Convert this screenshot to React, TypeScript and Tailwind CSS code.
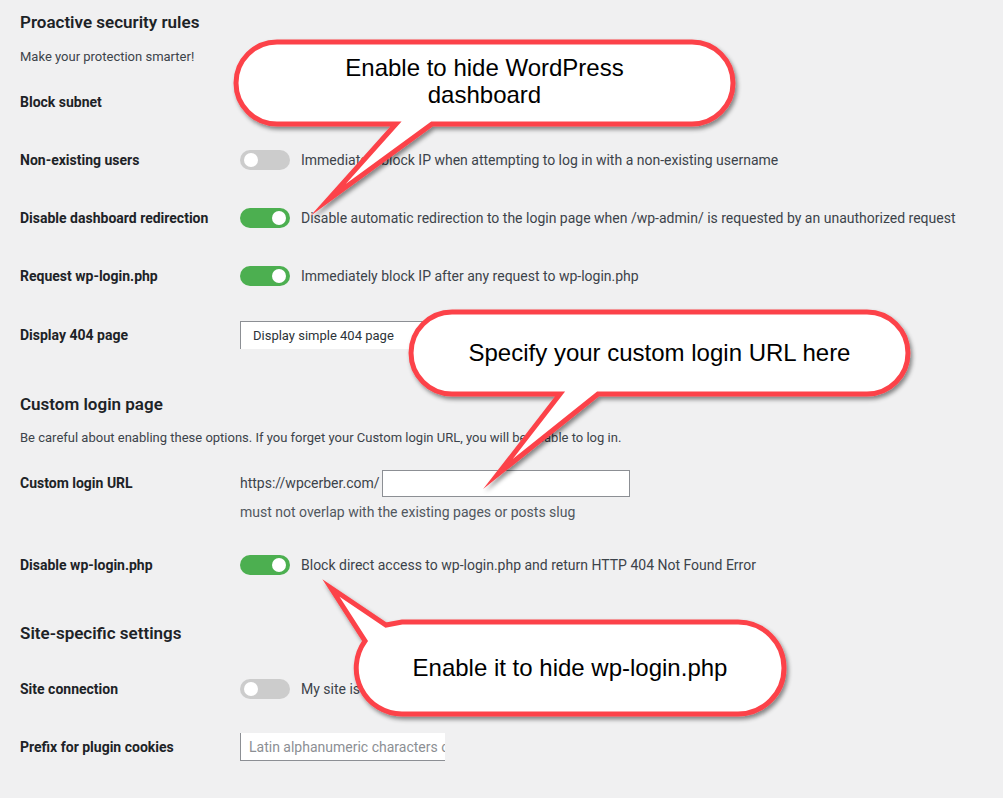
import React from 'react';

const Toggle: React.FC<{ on?: boolean }> = ({ on }) => (
  <div
    className={
      on
        ? 'relative w-[50px] h-[20px] rounded-full bg-[#4caf50] shrink-0'
        : 'relative w-[50px] h-[20px] rounded-full bg-[#cccccc] shrink-0'
    }>
    <div
      className={
        on
          ? 'absolute top-[3px] right-[4px] w-[14px] h-[14px] rounded-full bg-white'
          : 'absolute top-[3px] left-[4px] w-[14px] h-[14px] rounded-full bg-white'
      }
    />
  </div>
);

const Row: React.FC<{ label: string; children?: React.ReactNode; className?: string }> = ({
  label,
  children,
  className,
}) => (
  <div className={'flex items-center h-[58px] ' + (className || '')}>
    <div className="w-[220px] text-[14px] font-bold text-[#1d2327]">{label}</div>
    <div className="flex items-center gap-[11px] text-[14px] text-[#3c434a]">{children}</div>
  </div>
);

// callout bubbles drawn over the settings
const Bubbles: React.FC = () => (
  <>
    <svg
      className="absolute inset-0 pointer-events-none"
      width={1003}
      height={798}
      viewBox="0 0 1003 798">
      <defs>
        <filter id="shadow" x="-10%" y="-20%" width="120%" height="150%">
          <feDropShadow dx="2" dy="3" stdDeviation="2" floodColor="#000" floodOpacity="0.45" />
        </filter>
      </defs>
      <g fill="#ffffff" stroke="#fc4349" strokeWidth={5} strokeLinejoin="miter" strokeMiterlimit={12} filter="url(#shadow)">
        <path d="M 277 42 H 692 A 41 41 0 0 1 692 124 H 432 L 328 200 L 396 124 H 277 A 41 41 0 0 1 277 42 Z" />
        <path d="M 452 312 H 867 A 41 41 0 0 1 867 394 H 598 L 498 474 L 560 394 H 452 A 41 41 0 0 1 452 312 Z" />
        <path d="M 402 622 H 738 A 46 46 0 0 1 738 714 H 402 A 46 46 0 0 1 365 641 L 331 588 L 386 625 Z" />
      </g>
    </svg>
    <div className="absolute left-[236px] top-[40px] w-[497px] h-[82px] flex items-center justify-center text-center text-[24px] leading-[27px] text-black font-['Liberation_Sans',Arial,sans-serif]">
      Enable to hide WordPress
      <br />
      dashboard
    </div>
    <div className="absolute left-[411px] top-[311px] w-[497px] h-[82px] flex items-center justify-center text-center text-[24px] leading-[27px] text-black font-['Liberation_Sans',Arial,sans-serif]">
      Specify your custom login URL here
    </div>
    <div className="absolute left-[356px] top-[621px] w-[428px] h-[92px] flex items-center justify-center text-center text-[24px] leading-[27px] text-black font-['Liberation_Sans',Arial,sans-serif]">
      Enable it to hide wp-login.php
    </div>
  </>
);

export default function App() {
  return (
    <div className="relative w-full h-[798px] overflow-hidden bg-[#f0f0f1] font-['Roboto','Noto_Sans',sans-serif]">
      <div className="px-5 pt-[10px]">
        <h2 className="h-[24px] leading-[24px] text-[17px] font-semibold text-[#1d2327]">
          Proactive security rules
        </h2>
        <p className="mt-[13px] h-[20px] leading-[20px] text-[13px] text-[#3c434a]">
          Make your protection smarter!
        </p>

        <div className="mt-[6px]">
          <Row label="Block subnet" />
          <Row label="Non-existing users">
            <Toggle />
            <span>Immediately block IP when attempting to log in with a non-existing username</span>
          </Row>
          <Row label="Disable dashboard redirection">
            <Toggle on />
            <span>
              Disable automatic redirection to the login page when /wp-admin/ is requested by an unauthorized
              request
            </span>
          </Row>
          <Row label="Request wp-login.php">
            <Toggle on />
            <span>Immediately block IP after any request to wp-login.php</span>
          </Row>
          <Row label="Display 404 page" className="pt-[2px]">
            <div className="w-[190px] h-[28px] flex items-center pl-[12px] bg-white border-l border-t border-[#8c8f94] text-[13px] text-[#2c3338]">
              Display simple 404 page
            </div>
          </Row>
        </div>

        <h2 className="mt-[29px] h-[24px] leading-[24px] text-[17px] font-semibold text-[#1d2327]">
          Custom login page
        </h2>
        <p className="mt-[12px] h-[20px] leading-[20px] text-[13px] text-[#3c434a]">
          Be careful about enabling these options. If you forget your Custom login URL, you will be unable to log in.
        </p>

        <div className="pt-[22px] flex">
          <div className="w-[220px] h-[27px] leading-[27px] text-[14px] font-bold text-[#1d2327]">
            Custom login URL
          </div>
          <div className="text-[14px] text-[#3c434a]">
            <div className="flex items-center h-[27px]">
              <span>https://wpcerber.com/</span>
              <div className="ml-[2px] w-[248px] h-[27px] bg-white border border-[#8c8f94]" />
            </div>
            <div className="mt-[5px] h-[20px] leading-[20px] text-[#50575e]">
              must not overlap with the existing pages or posts slug
            </div>
          </div>
        </div>

        <Row label="Disable wp-login.php" className="mt-[14px]">
          <Toggle on />
          <span>Block direct access to wp-login.php and return HTTP 404 Not Found Error</span>
        </Row>

        <h2 className="mt-[27px] h-[24px] leading-[24px] text-[17px] font-semibold text-[#1d2327]">
          Site-specific settings
        </h2>

        <Row label="Site connection" className="mt-[15px]">
          <Toggle />
          <span>My site is behind a reverse proxy</span>
        </Row>
        <Row label="Prefix for plugin cookies">
          <input
            type="text"
            placeholder="Latin alphanumeric characters only"
            className="w-[205px] h-[28px] pl-[8px] bg-white border-l border-b border-[#8c8f94] text-[14px] outline-none placeholder:text-[#8c8f94]"
          />
        </Row>
      </div>

      <Bubbles />
    </div>
  );
}
